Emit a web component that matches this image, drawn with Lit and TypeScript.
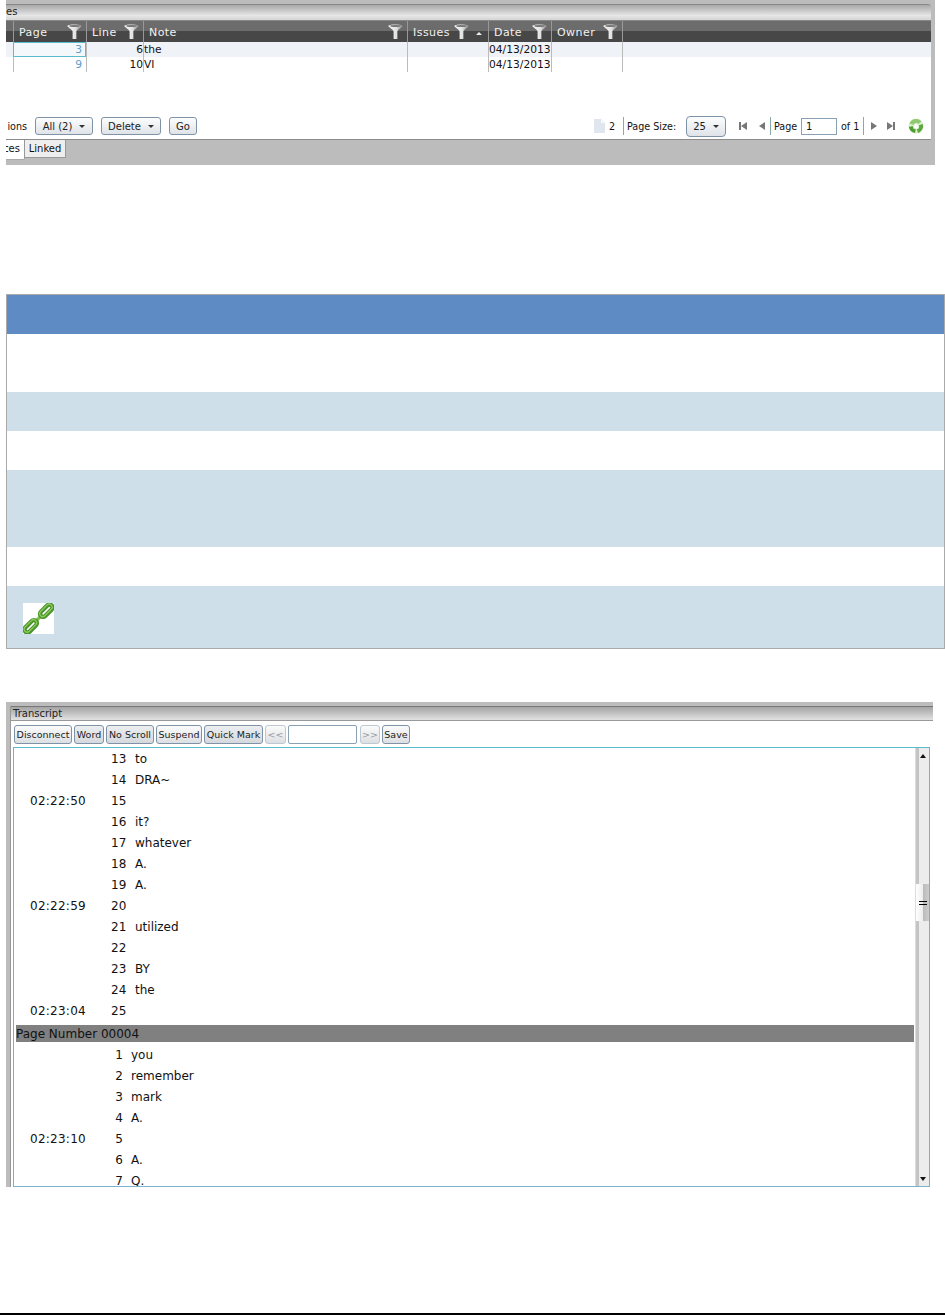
import { LitElement, html, css } from "lit";
import { customElement } from "lit/decorators.js";

const funnel = html`<svg class="fn" width="15" height="15" viewBox="0 0 15 15">
<defs><linearGradient id="fg" x1="0" x2="1" y1="0" y2="0"><stop offset="0" stop-color="#f4f4f4"/><stop offset=".55" stop-color="#e4e4e4"/><stop offset="1" stop-color="#8c8c8c"/></linearGradient></defs>
<path d="M0.3 1.8 C2 0 13 0 14.7 1.8 C14.5 3.6 9.6 5.4 9.4 7.5 L9.4 15 L5.6 15 L5.6 7.5 C5.4 5.4 .5 3.6 .3 1.8 Z" fill="url(#fg)"/>
<ellipse cx="7.5" cy="2" rx="5.4" ry="1.1" fill="#777"/></svg>`;

const columns = [
  { label: "Page", w: 73, fn: true },
  { label: "Line", w: 57, fn: true },
  { label: "Note", w: 264, fn: true },
  { label: "Issues", w: 81, fn: true, sort: true },
  { label: "Date", w: 63, fn: true },
  { label: "Owner", w: 71, fn: true },
];

const rows = [
  { p: "3", l: "6", n: "the", d: "04/13/2013", alt: true },
  { p: "9", l: "10", n: "VI", d: "04/13/2013", alt: false },
];

const first = [
  ["13", "to", ""], ["14", "DRA~", ""], ["15", "", "02:22:50"], ["16", "it?", ""],
  ["17", "whatever", ""], ["18", "A.", ""], ["19", "A.", ""], ["20", "", "02:22:59"],
  ["21", "utilized", ""], ["22", "", ""], ["23", "BY", ""], ["24", "the", ""], ["25", "", "02:23:04"],
];
const second = [
  ["1", "you", ""], ["2", "remember", ""], ["3", "mark", ""], ["4", "A.", ""],
  ["5", "", "02:23:10"], ["6", "A.", ""], ["7", "Q.", ""],
];

const caret = html`<span class="caret"></span>`;

const recycle = html`<svg width="16" height="16" viewBox="0 0 16 16">
<circle cx="8" cy="8" r="7.6" fill="#dcefd0"/>
<g fill="none" stroke-width="4">
<path d="M3.4 6.2 A5.2 5.2 0 0 1 12 4.6" stroke="#8fca72"/>
<path d="M12.9 6.6 A5.2 5.2 0 0 1 9.4 13" stroke="#5aa93a"/>
<path d="M7.4 13.1 A5.2 5.2 0 0 1 2.9 8.6" stroke="#4f9e30"/>
</g>
<path d="M8 5.2 L11 10.6 H5 Z" fill="#fff"/></svg>`;

const chain = html`<svg class="chain" width="31" height="31" viewBox="0 0 31 31">
<rect width="31" height="31" fill="#fff"/>
<g fill="none" transform="rotate(-45 15.5 15.5)">
<path d="M10 15.5 H21" stroke="#7cc04e" stroke-width="3.4"/>
<rect x="-3" y="12.5" width="15" height="6" rx="3" stroke="#4a9429" stroke-width="4.4"/>
<rect x="19" y="12.5" width="15" height="6" rx="3" stroke="#4a9429" stroke-width="4.4"/>
<rect x="-3" y="12" width="15" height="6" rx="3" stroke="#8ccb5e" stroke-width="1.3"/>
<rect x="19" y="12" width="15" height="6" rx="3" stroke="#8ccb5e" stroke-width="1.3"/>
</g></svg>`;

@customElement("app-root")
export class AppRoot extends LitElement {
  static styles = css`
    :host { display: block; width: 945px; height: 1315px; background: #fff; font-family: "DejaVu Sans", Verdana, sans-serif; font-size: 10px; color: #111; overflow: hidden; box-sizing: border-box; border-bottom: 2px solid #000; }
    * { box-sizing: border-box; }
    .grid-panel { margin-left: 6px; width: 929px; height: 165px; background: #bcbcbc; padding: 4px 4px 0 0; display: flex; flex-direction: column; }
    .inner { height: 136px; flex: none; background: #fff; border-bottom: 1px solid #8c8c8c; display: flex; flex-direction: column; border-radius: 0 3px 0 0; border-top: 1px solid #888; }
    .title { height: 15px; background: linear-gradient(#a8a8a8, #e6e6e6 70%, #d4d4d4); font-size: 10px; line-height: 14px; color: #222; white-space: nowrap; overflow: hidden; }
    .head { height: 22px; display: flex; padding-left: 7px; background: linear-gradient(#6c6c6c 0, #6c6c6c 50%, #474747 50%, #474747 100%); border-top: 1px solid #888; }
    .hc { display: flex; align-items: center; padding: 2px 0 0 5px; border-left: 1px solid #999; color: #f2f2f2; font-size: 11px; letter-spacing: .45px; position: relative; }
    .hc .fn { position: absolute; right: 4px; top: 3px; }
    .hc.sorted .fn { right: 19px; }
    .sort { position: absolute; right: 6px; top: 11px; width: 0; height: 0; border: 3px solid transparent; border-top: 0; border-bottom: 3px solid #eee; }
    .hc.last { width: 1px; padding: 0; }
    .row { height: 15px; display: flex; padding-left: 7px; font-size: 10.7px; line-height: 15px; white-space: nowrap; }
    .row.alt { background: #eff2f7; }
    .c { border-left: 1px solid #bbb; height: 100%; padding: 0; }
    .c.r { text-align: right; }
    .c.link { color: #5c9fd0; padding-right: 4px; }
    .c.sel { outline: 1px solid #5bbccf; outline-offset: -1px; background: #f5f8fb; }
    .pager { margin-top: auto; height: 22px; display: flex; align-items: center; font-size: 9.6px; white-space: nowrap; margin-bottom: 2px; }
    .pager .lbl { overflow: hidden; display: flex; justify-content: flex-end; }
    .btn { height: 18px; border: 1px solid #7f93a8; border-radius: 3px; background: linear-gradient(#fdfdfd, #dfe3e8); display: flex; align-items: center; justify-content: center; gap: 7px; font-size: 10px; color: #222; }
    .caret { width: 0; height: 0; border: 3px solid transparent; border-bottom: 0; border-top: 3px solid #333; }
    .left-actions { display: flex; align-items: center; gap: 8px; }
    .right-actions { margin-left: auto; display: flex; align-items: center; width: 337px; flex: none; }
    .sep { width: 1px; height: 18px; background: #8aa; flex: none; }
    .tri { width: 0; height: 0; border: 4px solid transparent; flex: none; }
    .tri.l { border-left: 0; border-right: 6px solid #777; }
    .tri.r { border-right: 0; border-left: 6px solid #777; }
    .bar { width: 2px; height: 8px; background: #777; flex: none; }
    .pgin { width: 36px; height: 17px; border: 1px solid #8aa0b4; padding-left: 4px; line-height: 15px; background: #fff; flex: none; font-size: 10px; }
    .tabs { flex: 1; display: flex; align-items: flex-start; margin-right: -4px; }
    .tab-a { width: 19px; height: 20px; background: #fff; overflow: hidden; display: flex; justify-content: flex-end; line-height: 18px; padding-right: 4px; border-right: 1px solid #999; border-bottom: 1px solid #aaa; font-size: 10px; border-radius: 0 0 2px 0; }
    .tab-b { width: 41px; height: 18px; background: #eee; border-right: 1px solid #999; border-bottom: 1px solid #999; text-align: center; line-height: 17px; font-size: 10px; }
    .blue-table { margin: 129px 0 0 6px; width: 939px; height: 355px; border: 1px solid #aaa; display: flex; flex-direction: column; }
    .blue-table > div { flex: none; }
    .bh { background: #5f8bc4; height: 39px; }
    .b0 { background: #fff; }
    .b1 { background: #cfdfe9; }
    .chain-row { padding: 17px 0 0 16px; }
    .chain { display: block; }
    .transcript { margin: 53px 0 0 6px; width: 927px; height: 485px; background: #bcbcbc; padding: 4px 0 0 4px; overflow: hidden; }
    .t-inner { height: 100%; background: #fff; display: flex; flex-direction: column; border-left: 1px solid #999; }
    .t-title { height: 15px; background: linear-gradient(#a4a4a4, #e2e2e2); border-top: 1px solid #777; border-bottom: 1px solid #999; line-height: 13px; padding-left: 2px; font-size: 10px; color: #222; flex: none; }
    .toolbar { height: 26px; display: flex; align-items: center; gap: 2px; padding-left: 3px; flex: none; }
    .tb { height: 19px; border: 1px solid #7f93a8; border-radius: 3px; background: linear-gradient(#fbfbfb, #dcdfe3); font-size: 9.5px; line-height: 17px; text-align: center; color: #222; white-space: nowrap; flex: none; }
    .tb.on { background: linear-gradient(#eceef0, #d5d9dd); }
    .tb.off { color: #999; border-color: #bcc8d2; }
    .tin { width: 69px; height: 19px; border: 1px solid #8aa0b4; border-radius: 2px; background: #fff; flex: none; margin-right: 1px; }
    .box { margin-left: 2px; width: 917px; flex: 1; border: 1px solid #5bbccf; border-bottom-color: #7ab4cc; display: flex; overflow: hidden; min-height: 0; }
    .content { flex: 1; overflow: hidden; font-size: 12px; min-width: 0; }
    .ln { height: 21px; display: grid; grid-template-columns: 16px 81px 15px 9px 1fr; line-height: 21px; white-space: nowrap; }
    .ln .n { text-align: right; grid-column: 3; }
    .ln .tm { grid-column: 2; letter-spacing: .25px; }
    .ln .x { grid-column: 5; }
    .p2 .ln { grid-template-columns: 16px 81px 12px 8px 1fr; }
    .pn { margin: 3px 1px 3px 2px; height: 17px; background: #808080; line-height: 19px; padding-left: 0; font-size: 12px; color: #111; }
    .p1 { padding-top: 1px; }
    .scroll { width: 14px; flex: none; background: linear-gradient(90deg, #c4c4c4 0, #c4c4c4 3px, #ececec 3px); display: flex; flex-direction: column; align-items: center; justify-content: space-between; padding: 6px 0 5px; position: relative; border-left: 1px solid #ddd; }
    .up { width: 0; height: 0; border: 3px solid transparent; border-top: 0; border-bottom: 4px solid #111; }
    .dn { width: 0; height: 0; border: 3px solid transparent; border-bottom: 0; border-top: 4px solid #111; }
    .thumb { position: absolute; left: 0; right: 0; top: 136px; height: 37px; background: linear-gradient(90deg, #fff 0, #eee 50%, #bbb 55%, #ccc 100%); display: flex; flex-direction: column; justify-content: center; align-items: center; gap: 2px; }
    .thumb i { display: block; width: 8px; height: 1px; background: #000; }
  `;

  private line(l: string[]) {
    return html`<div class="ln"><span class="tm">${l[2]}</span><span class="n">${l[0]}</span><span class="x">${l[1]}</span></div>`;
  }

  render() {
    return html`
      <div class="grid-panel">
        <div class="inner">
          <div class="title">es</div>
          <div class="head">
            ${columns.map(c => html`<div class="hc ${c.sort ? "sorted" : ""}" style="width:${c.w}px">${c.label}${c.fn ? funnel : ""}${c.sort ? html`<span class="sort"></span>` : ""}</div>`)}
            <div class="hc last"></div>
          </div>
          ${rows.map((r, i) => html`<div class="row ${r.alt ? "alt" : ""}">
            <div class="c r link ${i === 0 ? "sel" : ""}" style="width:73px">${r.p}</div>
            <div class="c r" style="width:57px">${r.l}</div>
            <div class="c" style="width:264px">${r.n}</div>
            <div class="c" style="width:81px"></div>
            <div class="c" style="width:63px">${r.d}</div>
            <div class="c" style="width:71px"></div>
            <div class="c" style="width:1px;padding:0"></div>
          </div>`)}
          <div class="pager">
            <div class="left-actions">
              <div class="lbl" style="width:21px"><span>ions</span></div>
              <div class="btn" style="width:58px">All (2) ${caret}</div>
              <div class="btn" style="width:60px">Delete ${caret}</div>
              <div class="btn" style="width:28px">Go</div>
            </div>
            <div class="right-actions">
              <svg width="11" height="14" viewBox="0 0 11 14" style="flex:none"><path d="M0 0H7L11 4V14H0Z" fill="#dfe6ee"/><path d="M7 0L11 4H7Z" fill="#f6f8fa"/></svg>
              <span style="margin-left:4px;width:14px;flex:none">2</span>
              <span class="sep"></span>
              <span style="margin-left:3px;width:59px;flex:none">Page Size:</span>
              <div class="btn" style="width:40px;height:21px;flex:none;border-radius:4px">25 ${caret}</div>
              <span class="bar" style="margin-left:13px"></span><span class="tri l"></span>
              <span class="tri l" style="margin-left:12px"></span>
              <span class="sep" style="margin-left:5px"></span>
              <span style="margin-left:3px;width:27px;flex:none">Page</span>
              <span class="pgin">1</span>
              <span style="margin-left:4px;width:22px;flex:none">of 1</span>
              <span class="sep"></span>
              <span class="tri r" style="margin-left:7px"></span>
              <span class="tri r" style="margin-left:10px"></span><span class="bar"></span>
              <span style="margin-left:13px;display:flex;flex:none">${recycle}</span>
            </div>
          </div>
        </div>
        <div class="tabs">
          <div class="tab-a"><span>ces</span></div>
          <div class="tab-b">Linked</div>
        </div>
      </div>

      <div class="blue-table">
        <div class="bh"></div>
        <div class="b0" style="height:58px"></div>
        <div class="b1" style="height:39px"></div>
        <div class="b0" style="height:39px"></div>
        <div class="b1" style="height:77px"></div>
        <div class="b0" style="height:39px"></div>
        <div class="b1 chain-row" style="height:62px">${chain}</div>
      </div>

      <div class="transcript">
        <div class="t-inner">
          <div class="t-title">Transcript</div>
          <div class="toolbar">
            <div class="tb" style="width:58px">Disconnect</div>
            <div class="tb on" style="width:30px">Word</div>
            <div class="tb on" style="width:48px">No Scroll</div>
            <div class="tb" style="width:46px">Suspend</div>
            <div class="tb on" style="width:59px">Quick Mark</div>
            <div class="tb off" style="width:21px">&lt;&lt;</div>
            <div class="tin"></div>
            <div class="tb off" style="width:20px">&gt;&gt;</div>
            <div class="tb" style="width:28px">Save</div>
          </div>
          <div class="box">
            <div class="content">
              <div class="p1">${first.map(l => this.line(l))}</div>
              <div class="pn">Page Number 00004</div>
              <div class="p2">${second.map(l => this.line(l))}</div>
            </div>
            <div class="scroll">
              <span class="up"></span>
              <div class="thumb"><i></i><i></i></div>
              <span class="dn"></span>
            </div>
          </div>
        </div>
      </div>
    `;
  }
}
